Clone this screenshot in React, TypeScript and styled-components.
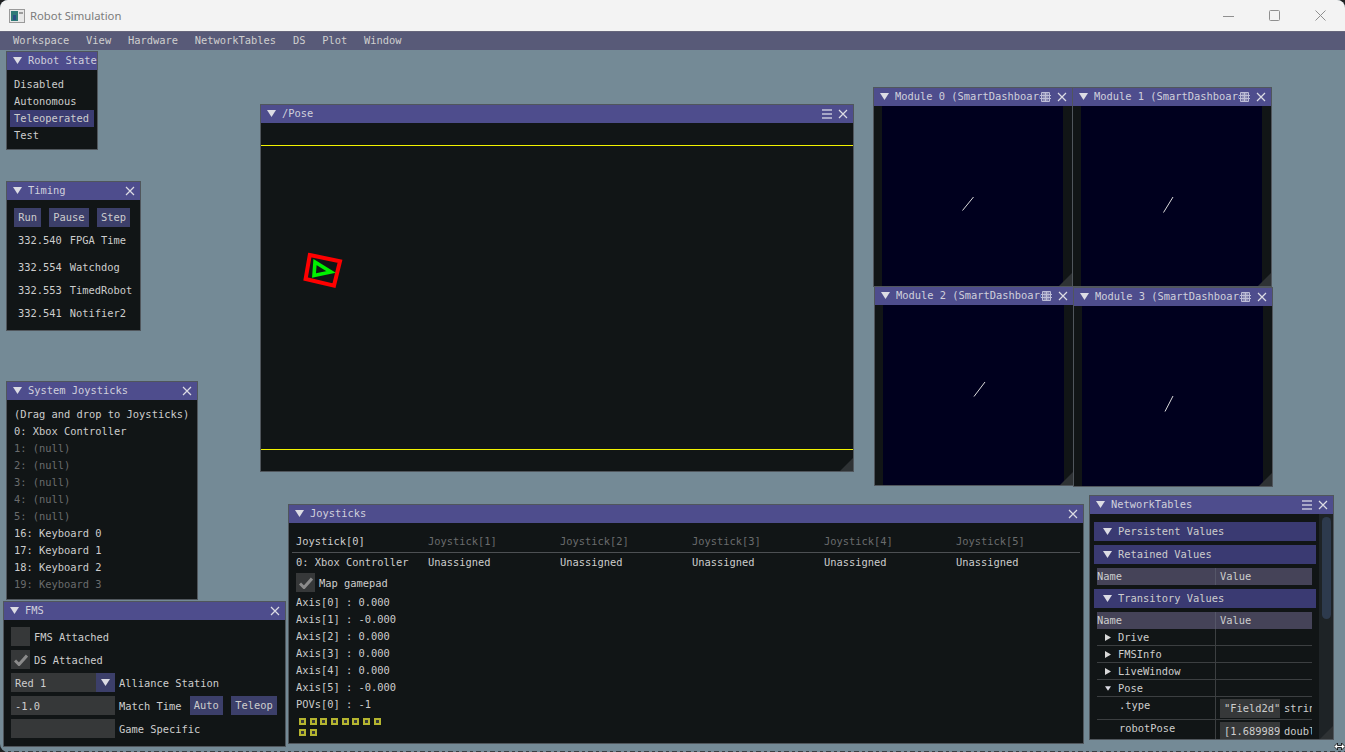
import React from "react";
import styled, { createGlobalStyle } from "styled-components";

const DESKTOP_TOP = 50;
const MONO = `"DejaVu Sans Mono", "Liberation Mono", monospace`;

const GlobalStyle = createGlobalStyle`
  html, body { margin: 0; padding: 0; background: #1f2122; overflow: hidden; }
  #root { width: 1345px; height: 752px; }
`;

const Frame = styled.div`
  width: 1345px;
  height: 752px;
  display: flex;
  flex-direction: column;
  overflow: hidden;
  border-radius: 8px 8px 0 8px;
  background: #748a96;
  font-family: ${MONO};
  font-size: 10.4px;
  color: #cdcdcd;
`;

const OsBar = styled.header`
  height: 31px;
  flex: none;
  display: flex;
  align-items: center;
  padding: 0 2px 0 9px;
  background: #f3f3f3;
  font-family: "Noto Sans", sans-serif;
  font-size: 11.3px;
  color: #7c7c7c;
`;
const OsTitle = styled.span`
  margin-left: 5px;
  flex: 1;
`;
const OsButton = styled.span`
  width: 46px;
  display: flex;
  justify-content: center;
`;

const MenuBar = styled.nav`
  height: 19px;
  flex: none;
  box-sizing: border-box;
  display: flex;
  align-items: center;
  gap: 16.8px;
  padding: 0 0 1px 13px;
  background: #585a78;
  color: #cfcfcf;
  box-shadow: inset 0 1px 0 #66667c;
`;

const Desktop = styled.main`
  position: relative;
  flex: 1;
`;
const BottomEdge = styled.div`
  height: 1px;
  flex: none;
  background: repeating-linear-gradient(90deg, #3a4044 0 5px, #748a96 5px 8px, #3a4044 8px 11px, #748a96 11px 14px);
`;

const Win = styled.section<{ $x: number; $y: number; $w: number; $h: number }>`
  position: absolute;
  left: ${(p) => p.$x}px;
  top: ${(p) => p.$y - DESKTOP_TOP}px;
  width: ${(p) => p.$w}px;
  height: ${(p) => p.$h}px;
  box-sizing: border-box;
  display: flex;
  flex-direction: column;
  border: 1px solid #50565c;
  background: #111516;
  overflow: hidden;
`;
const TitleBar = styled.div`
  height: 18px;
  flex: none;
  box-sizing: border-box;
  display: flex;
  align-items: center;
  padding: 0 0 1px 6px;
  gap: 6px;
  background: #4e4d8d;
  color: #d0d0dc;
`;
const TitleText = styled.span`
  flex: 1;
  min-width: 0;
  margin-right: -6px;
  padding-bottom: 2px;
  white-space: nowrap;
  overflow: hidden;
`;
const Body = styled.div`
  flex: 1;
  min-height: 0;
  display: flex;
  flex-direction: column;
  overflow: hidden;
`;
const Grip = styled.div`
  position: absolute;
  right: 0;
  bottom: 0;
  width: 13px;
  height: 13px;
  background: #2e3234;
  clip-path: polygon(100% 0, 100% 100%, 0 100%);
`;

const ListBody = styled(Body)`
  padding: 6px 3px 0;
`;
const Line = styled.div<{ $active?: boolean; $dim?: boolean }>`
  height: 17px;
  line-height: 17px;
  flex: none;
  padding: 0 4px;
  white-space: nowrap;
  color: ${(p) => (p.$dim ? "#6a6c6d" : "#cdcdcd")};
  background: ${(p) => (p.$active ? "#3b3c72" : "transparent")};
`;

const ControlBody = styled(Body)`
  padding: 8px 7px;
`;
const ButtonRow = styled.div`
  display: flex;
  gap: 8px;
  margin-bottom: 1px;
`;
const Button = styled.button`
  height: 19px;
  padding: 0 4.2px 1px;
  border: 0;
  background: #3c3f6a;
  color: #cdcdcd;
  font: inherit;
`;
const TimeRow = styled.div`
  height: 23px;
  flex: none;
  display: flex;
  align-items: center;
  gap: 8px;
  padding-left: 4px;
  white-space: nowrap;
`;
const Divider = styled.hr`
  height: 1px;
  margin: 3px -4px 1px;
  border: 0;
  background: #4d5053;
`;

const FormBody = styled(Body)`
  padding: 7px 7px;
  gap: 4px;
`;
const FormRow = styled.div`
  height: 19px;
  flex: none;
  display: flex;
  align-items: center;
  gap: 4px;
  white-space: nowrap;
`;
const Check = styled.span`
  width: 19px;
  height: 19px;
  flex: none;
  display: flex;
  align-items: center;
  justify-content: center;
  background: #363839;
`;
const Field = styled.span`
  width: 104px;
  height: 19px;
  flex: none;
  box-sizing: border-box;
  display: flex;
  align-items: center;
  padding-left: 4px;
  background: #363839;
`;
const ComboArrow = styled.span`
  width: 19px;
  height: 19px;
  flex: none;
  margin-left: auto;
  display: flex;
  align-items: center;
  justify-content: center;
  background: #3c3f6a;
`;
const FormButton = styled(Button)`
  margin-left: 4px;
`;

const JoyBody = styled(Body)`
  padding: 10px 7px 0;
`;
const JoyGrid = styled.div`
  display: grid;
  grid-template-columns: repeat(6, 132px);
`;
const JoyCell = styled.span<{ $dim?: boolean }>`
  height: 17px;
  line-height: 17px;
  white-space: nowrap;
  color: ${(p) => (p.$dim ? "#6a6c6d" : "#cdcdcd")};
`;
const JoyDivider = styled.hr`
  height: 1px;
  margin: 2px -4px 1px;
  border: 0;
  background: #4d5053;
`;
const AxisRow = styled.div`
  height: 17px;
  line-height: 17px;
  white-space: pre;
`;
const MapRow = styled(FormRow)`
  margin: 2px 0;
`;
const Squares = styled.div`
  display: flex;
  flex-wrap: wrap;
  gap: 4px 3.67px;
  width: 84px;
  margin: 5px 0 0 3px;
`;
const Square = styled.span`
  width: 7px;
  height: 7px;
  box-sizing: border-box;
  border: 2px solid #b5b52f;
  background: #363839;
`;

const NtBody = styled(Body)`
  flex-direction: row;
`;
const NtContent = styled.div`
  flex: 1;
  min-width: 0;
  display: flex;
  flex-direction: column;
  gap: 4px;
  padding: 8px 3px 0 4px;
`;
const Scroll = styled.div`
  width: 14px;
  flex: none;
  padding: 3px 2px 0 3px;
  box-sizing: border-box;
  background: #1e2326;
`;
const ScrollThumb = styled.div`
  height: 102px;
  border-radius: 5px;
  background: #2d3a4d;
`;
const Section = styled.div`
  height: 19px;
  flex: none;
  box-sizing: border-box;
  display: flex;
  align-items: center;
  gap: 6px;
  padding: 0 0 1px 9px;
  background: #3a3a72;
`;
const NtTable = styled.div`
  margin: 0 3px;
  width: 215px;
  flex: none;
  display: grid;
  grid-template-columns: 118px 97px;
`;
const HeadCell = styled.div<{ $first?: boolean }>`
  height: 17px;
  line-height: 17px;
  padding-left: ${(p) => (p.$first ? "0" : "4px")};
  background: #454358;
  border-left: ${(p) => (p.$first ? "0" : "1px solid #555668")};
`;
const NameCell = styled.div<{ $tall?: boolean }>`
  height: ${(p) => (p.$tall ? "23px" : "17px")};
  box-sizing: border-box;
  display: flex;
  align-items: ${(p) => (p.$tall ? "flex-start" : "center")};
  gap: 7px;
  padding-left: 8px;
  line-height: 17px;
  border-bottom: 1px solid #3c3f41;
`;
const Leaf = styled.span`
  margin: 0 0 0 14px;
`;
const ValueCell = styled.div<{ $tall?: boolean }>`
  height: ${(p) => (p.$tall ? "23px" : "17px")};
  box-sizing: border-box;
  display: flex;
  align-items: center;
  gap: 4px;
  padding-left: 4px;
  border-left: 1px solid #3c3f41;
  border-bottom: 1px solid #3c3f41;
  overflow: hidden;
  white-space: nowrap;
`;
const ValueBox = styled.span`
  width: 60px;
  height: 19px;
  flex: none;
  display: flex;
  align-items: center;
  padding-left: 4px;
  box-sizing: border-box;
  overflow: hidden;
  background: #363839;
`;

const ModuleBody = styled(Body)`
  padding: 0 9px 0 8px;
`;
const ModuleCanvas = styled.svg`
  flex: 1;
  min-height: 0;
  width: 100%;
  background: #00001e;
`;
const FieldCanvas = styled.svg`
  flex: 1;
  min-height: 0;
  width: 100%;
`;
const Cursor = styled.svg`
  position: absolute;
  right: 0;
  bottom: 0;
`;
const IconSvg = styled.svg`
  flex: none;
`;
const CloseSvg = styled(IconSvg)`
  margin-right: 5px;
`;

const Caret = ({ size = 9 }: { size?: number }) => (
  <IconSvg width={size} height={7} viewBox="0 0 9 7">
    <path d="M0 0h9L4.5 7z" fill="#dcdce4" />
  </IconSvg>
);
const TreeArrow = () => (
  <IconSvg width="6" height="7" viewBox="0 0 6 7">
    <path d="M0 0l6 3.5L0 7z" fill="#d8d8d8" />
  </IconSvg>
);
const CloseIcon = () => (
  <CloseSvg width="10" height="10" viewBox="0 0 10 10">
    <path d="M1 1l8 8M9 1l-8 8" stroke="#dcdce4" strokeWidth="1.2" />
  </CloseSvg>
);
const MenuIcon = () => (
  <IconSvg width="10" height="10" viewBox="0 0 10 10">
    <path d="M0 1h10M0 5h10M0 9h10" stroke="#a7a7c6" strokeWidth="2" />
  </IconSvg>
);
const DockIcon = () => (
  <IconSvg width="11" height="10" viewBox="0 0 11 10">
    <path d="M2.5 1h6v8h-6z" fill="#8e8eb4" />
    <path d="M1.5 .5h8v9h-8zM0 3.5h11M0 6.5h11M5.5 .5v9" fill="none" stroke="#bdbdd6" strokeWidth="1" />
  </IconSvg>
);
const CheckMark = () => (
  <svg width="14" height="12" viewBox="0 0 14 12">
    <path d="M1 6.5l4 4 8-9" fill="none" stroke="#8b8b8b" strokeWidth="3" />
  </svg>
);
const AppIcon = () => (
  <svg width="16" height="14" viewBox="0 0 16 14">
    <rect x=".5" y=".5" width="15" height="13" fill="#e8e8e8" stroke="#9a9a9a" />
    <rect x="2" y="2" width="7" height="10" fill="#2f7a78" />
    <rect x="4" y="6" width="3" height="5" fill="#2a4f86" />
    <rect x="10" y="3" width="4" height="2" fill="#9c9c9c" />
  </svg>
);

type WinProps = {
  x: number;
  y: number;
  w: number;
  h: number;
  title: string;
  menu?: boolean;
  dock?: boolean;
  noClose?: boolean;
  grip?: boolean;
  children: React.ReactNode;
};

const ImWindow = ({ x, y, w, h, title, menu, dock, noClose, grip, children }: WinProps) => (
  <Win $x={x} $y={y} $w={w} $h={h}>
    <TitleBar>
      <Caret />
      <TitleText>{title}</TitleText>
      {menu && <MenuIcon />}
      {dock && <DockIcon />}
      {!noClose && <CloseIcon />}
    </TitleBar>
    {children}
    {grip && <Grip />}
  </Win>
);

const modules = [
  { n: 0, x: 873, y: 87, h: 200, line: "M80.5 104.5L91.5 91" },
  { n: 1, x: 1072, y: 87, h: 200, line: "M82.5 106.5L92 91" },
  { n: 2, x: 874, y: 286, h: 200, line: "M91 91.5L102 77" },
  { n: 3, x: 1073, y: 287, h: 200, line: "M83 105.5L91 90" }
];

const joyHeaders = [0, 1, 2, 3, 4, 5];
const axes = ["0.000", "-0.000", "0.000", "0.000", "0.000", "-0.000"];
const nullSlots = [1, 2, 3, 4, 5];
const keyboards = [16, 17, 18];

const App = () => (
  <Frame>
    <GlobalStyle />
    <OsBar>
      <AppIcon />
      <OsTitle>Robot Simulation</OsTitle>
      <OsButton>
        <svg width="11" height="10" viewBox="0 0 11 10">
          <path d="M0 5.5h11" stroke="#8f8f8f" />
        </svg>
      </OsButton>
      <OsButton>
        <svg width="11" height="11" viewBox="0 0 11 11">
          <rect x=".5" y=".5" width="10" height="10" rx="1" fill="none" stroke="#8f8f8f" />
        </svg>
      </OsButton>
      <OsButton>
        <svg width="11" height="11" viewBox="0 0 11 11">
          <path d="M.5 .5l10 10M10.5 .5l-10 10" stroke="#8f8f8f" />
        </svg>
      </OsButton>
    </OsBar>
    <MenuBar>
      <span>Workspace</span>
      <span>View</span>
      <span>Hardware</span>
      <span>NetworkTables</span>
      <span>DS</span>
      <span>Plot</span>
      <span>Window</span>
    </MenuBar>
    <Desktop>
      <ImWindow x={6} y={51} w={92} h={99} title="Robot State" noClose>
        <ListBody>
          <Line>Disabled</Line>
          <Line>Autonomous</Line>
          <Line $active>Teleoperated</Line>
          <Line>Test</Line>
        </ListBody>
      </ImWindow>

      <ImWindow x={6} y={181} w={135} h={150} title="Timing">
        <ControlBody>
          <ButtonRow>
            <Button>Run</Button>
            <Button>Pause</Button>
            <Button>Step</Button>
          </ButtonRow>
          <TimeRow>
            <span>332.540</span>
            <span>FPGA Time</span>
          </TimeRow>
          <Divider />
          <TimeRow>
            <span>332.554</span>
            <span>Watchdog</span>
          </TimeRow>
          <TimeRow>
            <span>332.553</span>
            <span>TimedRobot</span>
          </TimeRow>
          <TimeRow>
            <span>332.541</span>
            <span>Notifier2</span>
          </TimeRow>
        </ControlBody>
      </ImWindow>

      <ImWindow x={260} y={104} w={594} h={368} title="/Pose" menu grip>
        <FieldCanvas viewBox="0 0 592 348">
          <path d="M0 22.5H592M0 326.5H592" stroke="#f2f200" strokeWidth="1" />
          {/* robot, window coords are offset by 261,123 */}
          <g transform="translate(-261 -123)">
            <path d="M309.8 255L340 261.2 334 285.6 305.6 279z" fill="none" stroke="#ff0000" strokeWidth="4" />
            <path d="M315 262L331 272 314 275.5z" fill="none" stroke="#00f000" strokeWidth="3.6" />
          </g>
        </FieldCanvas>
      </ImWindow>

      {modules.map((m) => (
        <ImWindow
          key={m.n}
          x={m.x}
          y={m.y}
          w={200}
          h={m.h}
          title={`Module ${m.n} (SmartDashboard)`}
          dock
          grip
        >
          <ModuleBody>
            <ModuleCanvas viewBox="0 0 181 180">
              <path d={m.line} stroke="#dcdcdc" strokeWidth="1" fill="none" />
            </ModuleCanvas>
          </ModuleBody>
        </ImWindow>
      ))}

      <ImWindow x={6} y={381} w={192} h={219} title="System Joysticks">
        <ListBody>
          <Line>(Drag and drop to Joysticks)</Line>
          <Line>0: Xbox Controller</Line>
          {nullSlots.map((n) => (
            <Line key={n} $dim>
              {n}: (null)
            </Line>
          ))}
          {keyboards.map((n) => (
            <Line key={n}>
              {n}: Keyboard {n - 16}
            </Line>
          ))}
          <Line $dim>19: Keyboard 3</Line>
        </ListBody>
      </ImWindow>

      <ImWindow x={3} y={601} w={283} h={146} title="FMS">
        <FormBody>
          <FormRow>
            <Check />
            <span>FMS Attached</span>
          </FormRow>
          <FormRow>
            <Check>
              <CheckMark />
            </Check>
            <span>DS Attached</span>
          </FormRow>
          <FormRow>
            <Field>
              Red 1
              <ComboArrow>
                <Caret />
              </ComboArrow>
            </Field>
            <span>Alliance Station</span>
          </FormRow>
          <FormRow>
            <Field>-1.0</Field>
            <span>Match Time</span>
            <FormButton>Auto</FormButton>
            <FormButton>Teleop</FormButton>
          </FormRow>
          <FormRow>
            <Field />
            <span>Game Specific</span>
          </FormRow>
        </FormBody>
      </ImWindow>

      <ImWindow x={288} y={504} w={796} h={240} title="Joysticks">
        <JoyBody>
          <JoyGrid>
            {joyHeaders.map((n) => (
              <JoyCell key={n} $dim={n > 0}>
                Joystick[{n}]
              </JoyCell>
            ))}
          </JoyGrid>
          <JoyDivider />
          <JoyGrid>
            <JoyCell>0: Xbox Controller</JoyCell>
            {joyHeaders.slice(1).map((n) => (
              <JoyCell key={n}>Unassigned</JoyCell>
            ))}
          </JoyGrid>
          <MapRow>
            <Check>
              <CheckMark />
            </Check>
            <span>Map gamepad</span>
          </MapRow>
          {axes.map((v, i) => (
            <AxisRow key={i}>
              Axis[{i}] : {v}
            </AxisRow>
          ))}
          <AxisRow>POVs[0] : -1</AxisRow>
          <Squares>
            {Array.from({ length: 10 }, (_, i) => (
              <Square key={i} />
            ))}
          </Squares>
        </JoyBody>
      </ImWindow>

      <ImWindow x={1089} y={495} w={245} h={245} title="NetworkTables" menu grip>
        <NtBody>
          <NtContent>
            <Section>
              <Caret />
              <span>Persistent Values</span>
            </Section>
            <Section>
              <Caret />
              <span>Retained Values</span>
            </Section>
            <NtTable>
              <HeadCell $first>Name</HeadCell>
              <HeadCell>Value</HeadCell>
            </NtTable>
            <Section>
              <Caret />
              <span>Transitory Values</span>
            </Section>
            <NtTable>
              <HeadCell $first>Name</HeadCell>
              <HeadCell>Value</HeadCell>
              <NameCell>
                <TreeArrow />
                Drive
              </NameCell>
              <ValueCell />
              <NameCell>
                <TreeArrow />
                FMSInfo
              </NameCell>
              <ValueCell />
              <NameCell>
                <TreeArrow />
                LiveWindow
              </NameCell>
              <ValueCell />
              <NameCell>
                <Caret size={6} />
                Pose
              </NameCell>
              <ValueCell />
              <NameCell $tall>
                <Leaf>.type</Leaf>
              </NameCell>
              <ValueCell $tall>
                <ValueBox>"Field2d"</ValueBox>
                string
              </ValueCell>
              <NameCell $tall>
                <Leaf>robotPose</Leaf>
              </NameCell>
              <ValueCell $tall>
                <ValueBox>[1.689989</ValueBox>
                double[]
              </ValueCell>
            </NtTable>
          </NtContent>
          <Scroll>
            <ScrollThumb />
          </Scroll>
        </NtBody>
      </ImWindow>

      <Cursor width="11" height="9" viewBox="0 0 11 9">
        <path d="M0 4.5L3.5 1v2.5h4V1L11 4.5 7.5 8V5.5h-4V8z" fill="#fff" stroke="#000" strokeWidth=".8" />
      </Cursor>
    </Desktop>
    <BottomEdge />
  </Frame>
);

export default App;
